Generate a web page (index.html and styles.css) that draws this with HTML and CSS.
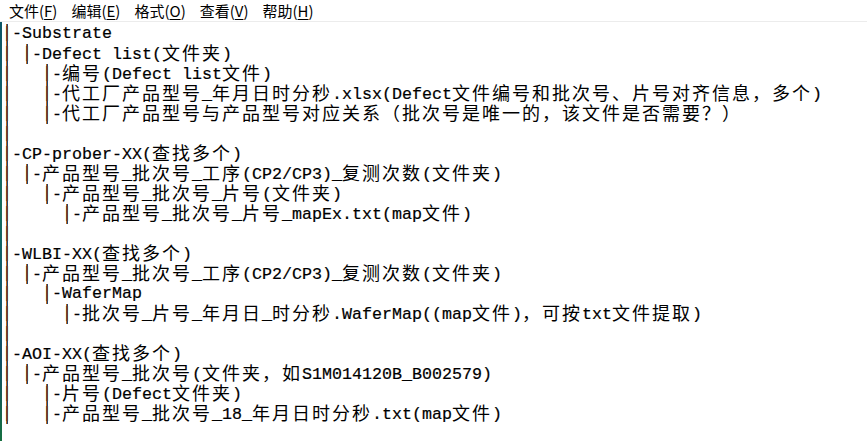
FILE: index.html
```html
<!DOCTYPE html>
<html lang="zh-CN">
<head>
<meta charset="utf-8">
<title>记事本</title>
<link rel="stylesheet" href="styles.css">
</head>
<body>
<div class="window">
  <nav class="menu">
    <span class="mi">文件(<u>F</u>)</span>
    <span class="mi">编辑(<u>E</u>)</span>
    <span class="mi">格式(<u>O</u>)</span>
    <span class="mi">查看(<u>V</u>)</span>
    <span class="mi">帮助(<u>H</u>)</span>
  </nav>
  <div class="body">
    <div class="strip"></div>
    <div class="text">
<div class="ln"><span class="p">|</span>-Substrate</div>
<div class="ln"><span class="p">|</span> <span class="p">|</span>-Defect list(<span class="c">文件夹</span>)</div>
<div class="ln"><span class="p">|</span>   <span class="p">|</span>-<span class="c">编号</span>(Defect list<span class="c">文件</span>)</div>
<div class="ln"><span class="p">|</span>   <span class="p">|</span>-<span class="c">代工厂产品型号</span>_<span class="c">年月日时分秒</span>.xlsx(Defect<span class="c">文件编号和批次号、片号对齐信息，多个</span>)</div>
<div class="ln"><span class="p">|</span>   <span class="p">|</span>-<span class="c">代工厂产品型号与产品型号对应关系（批次号是唯一的，该文件是否需要？）</span></div>
<div class="ln"><span class="p">|</span></div>
<div class="ln"><span class="p">|</span>-CP-prober-XX(<span class="c">查找多个</span>)</div>
<div class="ln"><span class="p">|</span> <span class="p">|</span>-<span class="c">产品型号</span>_<span class="c">批次号</span>_<span class="c">工序</span>(CP2/CP3)_<span class="c">复测次数</span>(<span class="c">文件夹</span>)</div>
<div class="ln"><span class="p">|</span>   <span class="p">|</span>-<span class="c">产品型号</span>_<span class="c">批次号</span>_<span class="c">片号</span>(<span class="c">文件夹</span>)</div>
<div class="ln"><span class="p">|</span>     <span class="p">|</span>-<span class="c">产品型号</span>_<span class="c">批次号</span>_<span class="c">片号</span>_mapEx.txt(map<span class="c">文件</span>)</div>
<div class="ln"><span class="p">|</span></div>
<div class="ln"><span class="p">|</span>-WLBI-XX(<span class="c">查找多个</span>)</div>
<div class="ln"><span class="p">|</span> <span class="p">|</span>-<span class="c">产品型号</span>_<span class="c">批次号</span>_<span class="c">工序</span>(CP2/CP3)_<span class="c">复测次数</span>(<span class="c">文件夹</span>)</div>
<div class="ln"><span class="p">|</span>   <span class="p">|</span>-WaferMap</div>
<div class="ln"><span class="p">|</span>     <span class="p">|</span>-<span class="c">批次号</span>_<span class="c">片号</span>_<span class="c">年月日</span>_<span class="c">时分秒</span>.WaferMap((map<span class="c">文件</span>)<span class="c">，可按</span>txt<span class="c">文件提取</span>)</div>
<div class="ln"><span class="p">|</span></div>
<div class="ln"><span class="p">|</span>-AOI-XX(<span class="c">查找多个</span>)</div>
<div class="ln"><span class="p">|</span> <span class="p">|</span>-<span class="c">产品型号</span>_<span class="c">批次号</span>(<span class="c">文件夹，如</span>S1M014120B_B002579)</div>
<div class="ln"><span class="p">|</span>   <span class="p">|</span>-<span class="c">片号</span>(Defect<span class="c">文件夹</span>)</div>
<div class="ln"><span class="p">|</span>   <span class="p">|</span>-<span class="c">产品型号</span>_<span class="c">批次号</span>_18_<span class="c">年月日时分秒</span>.txt(map<span class="c">文件</span>)</div>
    </div>
  </div>
</div>
</body>
</html>
```

FILE: styles.css
```css
html, body {
  margin: 0;
  padding: 0;
  background: #ffffff;
  overflow: hidden;
}

.window {
  width: 867px;
  height: 441px;
  display: flex;
  flex-direction: column;
  background: #ffffff;
}

.menu {
  height: 21px;
  display: flex;
  align-items: center;
  padding-left: 2px;
  border-bottom: 1px solid #ececec;
  font-family: "Noto Sans CJK SC", "Noto Sans", sans-serif;
  font-size: 15px;
  color: #000000;
}

.mi {
  padding: 0 7px;
  line-height: 21px;
  white-space: nowrap;
}

.mi u {
  text-decoration-thickness: 1px;
  text-underline-offset: 2px;
}

.body {
  flex: 1;
  display: flex;
  min-height: 0;
}

.strip {
  width: 2px;
  flex: none;
  background: linear-gradient(180deg, #0c5666 0%, #0f6470 25%, #136d5c 45%, #0b5a6c 60%, #0d4e66 80%, #167040 100%);
}

.text {
  padding-top: 2px;
  font-family: "Liberation Mono", monospace;
  font-size: 16.664px;
  line-height: 20px;
  color: #000000;
  -webkit-text-stroke: 0.2px #000000;
  text-spacing-trim: space-all;
}

.ln {
  height: 20px;
  white-space: pre;
}

.c {
  display: inline-block;
  font-family: "Noto Sans CJK SC", sans-serif;
  font-size: 18px;
  line-height: 16px;
  letter-spacing: 2px;
  vertical-align: -1px;
  -webkit-text-stroke: 0;
}

.p {
  display: inline-block;
  width: 10px;
  height: 20px;
  vertical-align: top;
  color: #7a4a22;
  background:
    linear-gradient(#b9661c, #b9661c) 4px 0 / 1px 100% no-repeat,
    linear-gradient(#23446e, #23446e) 5px 0 / 1px 100% no-repeat;
}
```
